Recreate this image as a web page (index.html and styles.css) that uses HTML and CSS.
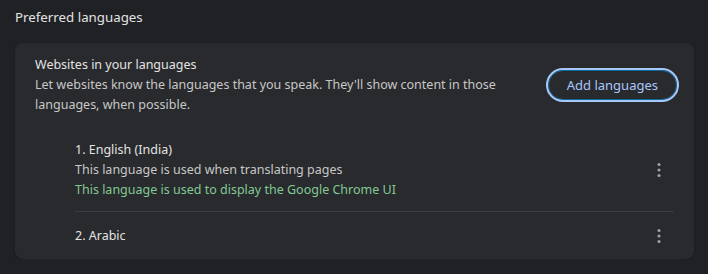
FILE: index.html
```html
<!DOCTYPE html>
<html lang="en">
<head>
    <meta charset="UTF-8">
    <title>Preferred languages</title>
    <link rel="stylesheet" href="styles.css">
</head>
<body>
    <h2 class="section-title">Preferred languages</h2>

    <div class="card">
        <!-- Cabeçalho -->
        <div class="card-header">
            <div class="header-text">
                <div class="label">Websites in your languages</div>
                <div class="sub-label">Let websites know the languages that you speak. They'll show content in those languages, when possible.</div>
            </div>
            <button type="button" class="add-btn">Add languages</button>
        </div>

        <!-- Lista de idiomas -->
        <ul class="lang-list">
            <li class="lang-item">
                <div class="lang-text">
                    <div class="lang-name">1. English (India)</div>
                    <div class="lang-note">This language is used when translating pages</div>
                    <div class="lang-ui">This language is used to display the Google Chrome UI</div>
                </div>
                <span class="more">
                    <svg width="20" height="20" viewBox="0 0 20 20"><circle cx="10" cy="4.5" r="1.6"/><circle cx="10" cy="10" r="1.6"/><circle cx="10" cy="15.5" r="1.6"/></svg>
                </span>
            </li>
            <li class="lang-item">
                <div class="lang-text">
                    <div class="lang-name">2. Arabic</div>
                </div>
                <span class="more">
                    <svg width="20" height="20" viewBox="0 0 20 20"><circle cx="10" cy="4.5" r="1.6"/><circle cx="10" cy="10" r="1.6"/><circle cx="10" cy="15.5" r="1.6"/></svg>
                </span>
            </li>
        </ul>
    </div>
</body>
</html>
```

FILE: styles.css
```css
body {
    margin: 0;
    padding: 0 14px 0 15px;
    background-color: #202124;
    font-family: "Noto Sans", Arial, sans-serif;
    font-size: 12.5px;
    line-height: 20px;
    color: #e3e3e3;
}

.section-title {
    font-size: 13.3px;
    font-weight: normal;
    margin: 0;
    padding: 7px 0 16px;
    line-height: 20px;
}

/* Cartão */
.card {
    background-color: #292a2d;
    border-radius: 8px;
    box-shadow: 0 1px 2px rgba(0, 0, 0, 0.3);
    padding: 12px 0 2px;
}
.card-header {
    display: flex;
    align-items: center;
    padding: 0 16px 0 20px;
    gap: 24px;
}
.header-text {
    flex: 1;
}
.sub-label {
    color: #c7c7c7;
}
.add-btn {
    font-family: inherit;
    font-size: 13px;
    color: #a8c7fa;
    background: transparent;
    border: 1px solid #0e6a9c;
    border-radius: 18px;
    padding: 0 18px;
    height: 30px;
    outline: 2px solid #a8c7fa;
    outline-offset: 0;
    cursor: pointer;
    margin-right: 1px;
}

/* Lista */
.lang-list {
    list-style: none;
    margin: 24px 0 0;
    padding: 0 20px 0 60px;
}
.lang-item {
    display: flex;
    align-items: center;
    padding: 1px 0 11px;
}
.lang-item + .lang-item {
    border-top: 1px solid #3c3d40;
    padding: 14px 0 11px;
}
.lang-text {
    flex: 1;
}
.lang-note {
    color: #c7c7c7;
}
.lang-ui {
    color: #81c995;
}
.more {
    display: flex;
    width: 20px;
    margin-right: 5px;
}
.more svg {
    fill: #9aa0a6;
}
```
